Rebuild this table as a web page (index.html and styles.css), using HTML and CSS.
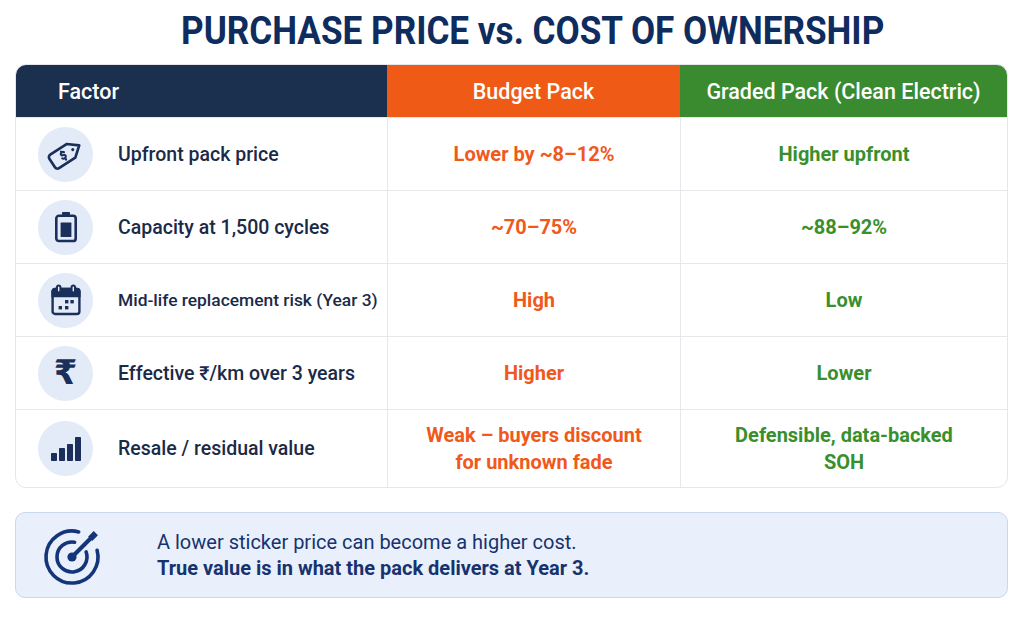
FILE: index.html
```html
<!DOCTYPE html>
<html>
<head>
<meta charset="utf-8">
<link rel="stylesheet" href="styles.css">
</head>
<body>
<div class="page">
  <h1 class="title"><span class="title-text">PURCHASE PRICE vs. COST OF OWNERSHIP</span></h1>
  <div class="table">
    <div class="row head">
      <div class="cell c1 h-factor">Factor</div>
      <div class="cell c2 h-budget">Budget Pack</div>
      <div class="cell c3 h-graded">Graded Pack (Clean Electric)</div>
    </div>
    <div class="row">
      <div class="cell c1 factor">
        <span class="ico">
          <svg viewBox="0 0 24 24" width="44" height="44" fill="none" stroke="#1a2f5a" stroke-width="1.45" stroke-linejoin="round" stroke-linecap="round">
            <g transform="rotate(-33 12 12)">
              <path d="M4.6 7.6h10.6l5.4 4.4-5.4 4.4H4.6a1.6 1.6 0 0 1-1.6-1.6V9.2a1.6 1.6 0 0 1 1.6-1.6z"/>
              <circle cx="16.4" cy="12" r="0.85" fill="#1a2f5a" stroke="none"/>
              <path d="M11.6 10.6c-0.3-0.5-1.1-0.7-1.7-0.4c-0.6 0.3-0.6 1 0 1.3l0.9 0.4c0.7 0.3 0.7 1.1 0 1.5c-0.6 0.3-1.5 0.1-1.8-0.5M10.4 9.4v0.6M10.4 14v0.6" stroke-width="1.15"/>
            </g>
          </svg>
        </span>
        <span>Upfront pack price</span>
      </div>
      <div class="cell c2 bad">Lower by ~8–12%</div>
      <div class="cell c3 good">Higher upfront</div>
    </div>
    <div class="row">
      <div class="cell c1 factor">
        <span class="ico">
          <svg viewBox="0 0 24 32" width="24" height="32" fill="none" stroke="#1a2f5a" stroke-width="2.6">
            <rect x="2.3" y="4.8" width="19.4" height="25.2" rx="2.6"/>
            <rect x="8" y="1" width="8" height="3" rx="0.8" fill="#1a2f5a" stroke="none"/>
            <rect x="6.6" y="11.6" width="10.8" height="14.4" rx="0.6" fill="#1a2f5a" stroke="none"/>
          </svg>
        </span>
        <span>Capacity at 1,500 cycles</span>
      </div>
      <div class="cell c2 bad">~70–75%</div>
      <div class="cell c3 good">~88–92%</div>
    </div>
    <div class="row">
      <div class="cell c1 factor tight">
        <span class="ico">
          <svg viewBox="0 0 30 32" width="30" height="32" fill="none" stroke="#1a2f5a" stroke-width="2.4">
            <rect x="1.6" y="5" width="26.8" height="25" rx="2.6"/>
            <path d="M1.6 7.6a2.6 2.6 0 0 1 2.6-2.6h21.6a2.6 2.6 0 0 1 2.6 2.6v4.4H1.6z" fill="#1a2f5a"/>
            <rect x="6" y="1.4" width="3.4" height="7" rx="1.7" fill="#e3ebf8" stroke-width="2"/>
            <rect x="20.6" y="1.4" width="3.4" height="7" rx="1.7" fill="#e3ebf8" stroke-width="2"/>
            <g fill="#1a2f5a" stroke="none">
              <rect x="14" y="16" width="3.4" height="3.4"/>
              <rect x="19.4" y="16" width="3.4" height="3.4"/>
              <rect x="7.6" y="22" width="3.4" height="3.4"/>
              <rect x="14" y="22" width="3.4" height="3.4"/>
            </g>
          </svg>
        </span>
        <span>Mid-life replacement risk (Year 3)</span>
      </div>
      <div class="cell c2 bad">High</div>
      <div class="cell c3 good">Low</div>
    </div>
    <div class="row">
      <div class="cell c1 factor">
        <span class="ico rupee">₹</span>
        <span>Effective ₹/km over 3 years</span>
      </div>
      <div class="cell c2 bad">Higher</div>
      <div class="cell c3 good">Lower</div>
    </div>
    <div class="row last">
      <div class="cell c1 factor">
        <span class="ico">
          <svg viewBox="0 0 30 24" width="30" height="24" fill="#1a2f5a">
            <rect x="0" y="16" width="6" height="8" rx="0.8"/>
            <rect x="8" y="11" width="6" height="13" rx="0.8"/>
            <rect x="16" y="7" width="6" height="17" rx="0.8"/>
            <rect x="24" y="0" width="6" height="24" rx="0.8"/>
          </svg>
        </span>
        <span>Resale / residual value</span>
      </div>
      <div class="cell c2 bad">Weak – buyers discount<br>for unknown fade</div>
      <div class="cell c3 good">Defensible, data-backed<br>SOH</div>
    </div>
  </div>
  <div class="callout">
    <span class="target">
      <svg viewBox="0 0 64 64" width="64" height="64" fill="none" stroke="#15357a" stroke-width="3.6" stroke-linecap="round">
        <path d="M36.7 8.9A26 26 0 1 0 55.1 27.3"/>
        <path d="M32.6 19.2A15 15 0 1 0 44.1 28.9"/>
        <circle cx="30" cy="34" r="4.6" fill="#15357a" stroke="none"/>
        <path d="M30 34L48 16" stroke-width="4"/>
        <polygon points="51.7,8.05 55.95,12.29 50.29,17.95 46.05,13.71" fill="#15357a" stroke="none"/>
      </svg>
    </span>
    <div class="callout-text">
      <p class="l1">A lower sticker price can become a higher cost.</p>
      <p class="l2">True value is in what the pack delivers at Year 3.</p>
    </div>
  </div>
</div>
</body>
</html>
```
FILE: styles.css
```css
* { box-sizing: border-box; }
html, body { margin: 0; padding: 0; background: #ffffff; }
body { font-family: Roboto, "Liberation Sans", sans-serif; width: 1024px; height: 619px; overflow: hidden; }
.page { padding: 0 16px 0 15px; }
.title {
  margin: 0;
  height: 64px;
  padding: 9px 0 0 42px;
  text-align: center;
  font-weight: 700;
  font-size: 39px;
  line-height: 44px;
  color: #0f2c5e;
  white-space: nowrap;
}
.title-text { display: inline-block; transform: scaleX(0.9); transform-origin: 50% 50%; }
.table {
  border: 1px solid #e4e6ea;
  border-radius: 11px;
  overflow: hidden;
  background: #fff;
}
.row {
  display: grid;
  grid-template-columns: 371px 293px 1fr;
  height: 73px;
  border-top: 1px solid #e6e8ec;
}
.row.head { height: 52px; border-top: none; }
.row.last { height: 78px; }
.cell {
  display: flex;
  align-items: center;
  justify-content: center;
  text-align: center;
  font-size: 20px;
  font-weight: 700;
  line-height: 27px;
  white-space: nowrap;
}
.c2, .c3 { border-left: 1px solid #e6e8ec; }
.head .cell { color: #fff; font-size: 21.5px; font-weight: 500; border-left: none; }
.h-factor { background: #1b2f4e; justify-content: flex-start; padding-left: 42px; }
.h-budget { background: #ef5b17; }
.h-graded { background: #3a8b2f; }
.row .factor {
  justify-content: flex-start;
  padding-left: 22px;
  gap: 25px;
  color: #1b2a48;
  font-weight: 500;
  font-size: 19.5px;
}
.row .factor.tight { font-size: 17.4px; }
.ico {
  width: 55px;
  height: 55px;
  border-radius: 50%;
  background: #e3ebf8;
  display: flex;
  align-items: center;
  justify-content: center;
  flex: none;
}
.rupee { font-family: "DejaVu Sans", sans-serif; font-size: 34px; font-weight: 700; color: #1a2f5a; line-height: 1; padding-bottom: 2px; }
.bad { color: #f0591c; }
.good { color: #3a8f2d; }
.callout {
  margin-top: 24px;
  height: 86px;
  background: #eaf0fb;
  border: 1px solid #c9d7f1;
  border-radius: 10px;
  display: flex;
  align-items: center;
  padding-left: 26px;
  gap: 51px;
}
.target { display: flex; flex: none; }
.callout-text p { margin: 0; font-size: 20px; line-height: 26px; color: #16336f; }
.l1 { font-weight: 400; }
.l2 { font-weight: 700; }
```
